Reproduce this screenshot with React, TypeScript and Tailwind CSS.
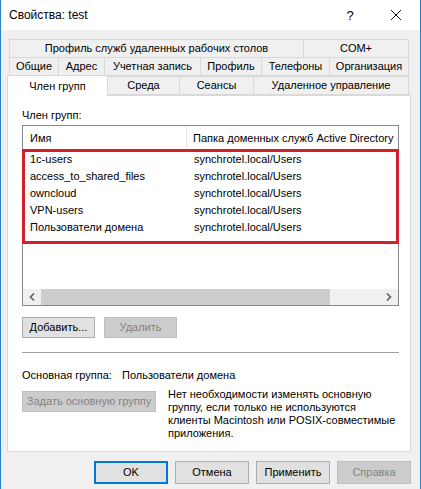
import React from "react";

const rows = [
  { name: "1c-users", path: "synchrotel.local/Users" },
  { name: "access_to_shared_files", path: "synchrotel.local/Users" },
  { name: "owncloud", path: "synchrotel.local/Users" },
  { name: "VPN-users", path: "synchrotel.local/Users" },
  { name: "Пользователи домена", path: "synchrotel.local/Users" },
];

const Tab = ({ label, w, first }: { label: string; w: string; first?: boolean }) => (
  <div
    className={`${w} ${first ? "" : "-ml-px"} h-[19px] flex items-center justify-center border border-[#d9d9d9] bg-[#f0f0f0] whitespace-nowrap`}
  >
    {label}
  </div>
);

const Btn = ({ label, w, h = "h-[21px]", disabled, primary }: { label: string; w: string; h?: string; disabled?: boolean; primary?: boolean }) => (
  <div
    className={`${w} ${h} flex items-center justify-center whitespace-nowrap ${
      disabled
        ? "bg-[#cccccc] border border-[#bfbfbf] text-[#838383]"
        : primary
        ? "bg-[#e1e1e1] border-2 border-[#0078d7] text-black"
        : "bg-[#e1e1e1] border border-[#adadad] text-black"
    }`}
  >
    {label}
  </div>
);

export default function App() {
  return (
    <div className="w-[421px] h-[489px] flex flex-col bg-[#f0f0f0] border-x border-[#2a7fd0] text-[11px] leading-[15px] text-black font-['Liberation_Sans',sans-serif] overflow-hidden">
      <div className="h-[30px] shrink-0 bg-white flex items-center pl-[8px]">
        <span className="text-[12px]">Свойства: test</span>
        <span className="ml-auto w-[46px] text-center text-[13px]">?</span>
        <span className="w-[46px] mr-[1px] flex justify-center">
          <svg width="12" height="12" viewBox="0 0 12 12">
            <path d="M1 1 L11 11 M11 1 L1 11" stroke="#111" strokeWidth="1" />
          </svg>
        </span>
      </div>

      <div className="pt-[9px] pl-[6px]">
        <div className="flex pl-[2px]">
          <Tab label="Профиль служб удаленных рабочих столов" w="w-[295px]" first />
          <Tab label="COM+" w="w-[106px]" />
        </div>
        <div className="flex pl-[2px] -mt-px">
          <Tab label="Общие" w="w-[50px]" first />
          <Tab label="Адрес" w="w-[47px]" />
          <Tab label="Учетная запись" w="w-[97px]" />
          <Tab label="Профиль" w="w-[62px]" />
          <Tab label="Телефоны" w="w-[69px]" />
          <Tab label="Организация" w="w-[80px]" />
        </div>
        <div className="flex -mt-px items-end">
          <div className="relative z-10 w-[101px] h-[21px] -mb-px flex items-center justify-center border border-b-0 border-[#d9d9d9] bg-white">
            Член групп
          </div>
          <Tab label="Среда" w="w-[73px]" />
          <Tab label="Сеансы" w="w-[75px]" />
          <Tab label="Удаленное управление" w="w-[156px]" />
        </div>

        <div className="w-[404px] h-[357px] bg-white border border-[#d9d9d9] pl-[14px] pr-[10px] pt-[12px]">
          <div>Член групп:</div>
          <div className="mt-[2px] w-[377px] h-[181px] border border-[#828790] flex flex-col relative">
            <div className="h-[25px] shrink-0 flex items-start">
              <div className="w-[164px] h-[24px] flex items-center pl-[7px] border-r border-[#e5e5e5]">Имя</div>
              <div className="h-[24px] flex items-center pl-[6px] whitespace-nowrap">Папка доменных служб Active Directory</div>
            </div>
            <div className="flex-1 flex flex-col">
              {rows.map((r) => (
                <div key={r.name} className="h-[17px] flex items-center">
                  <div className="w-[164px] pl-[7px] whitespace-nowrap">{r.name}</div>
                  <div className="pl-[7px]">{r.path}</div>
                </div>
              ))}
            </div>
            {/* red highlight drawn over the rows */}
            <div className="absolute left-[-1px] top-[23px] w-[377px] h-[95px] border-[3px] border-[#d3202f]" />
            <div className="h-[16px] shrink-0 flex items-center bg-[#f0f0f0]">
              <div className="w-[18px] flex justify-center">
                <svg width="6" height="8" viewBox="0 0 6 8">
                  <path d="M5 0.5 L1.5 4 L5 7.5" stroke="#606060" strokeWidth="1.6" fill="none" />
                </svg>
              </div>
              <div className="w-[289px] h-full bg-[#cdcdcd]" />
              <div className="flex-1" />
              <div className="w-[18px] flex justify-center">
                <svg width="6" height="8" viewBox="0 0 6 8">
                  <path d="M1 0.5 L4.5 4 L1 7.5" stroke="#606060" strokeWidth="1.6" fill="none" />
                </svg>
              </div>
            </div>
          </div>

          <div className="mt-[11px] flex gap-[9px]">
            <Btn label="Добавить..." w="w-[73px]" />
            <Btn label="Удалить" w="w-[73px]" disabled />
          </div>

          <div className="mt-[14px] h-px w-[377px] bg-[#a0a0a0]" />

          <div className="mt-[15px] flex">
            <span className="w-[100px]">Основная группа:</span>
            <span>Пользователи домена</span>
          </div>

          <div className="mt-[5px] flex">
            <div className="pt-[3px]">
              <Btn label="Задать основную группу" w="w-[134px]" disabled />
            </div>
            <div className="ml-[12px] leading-[13px] whitespace-nowrap">
              Нет необходимости изменять основную
              <br />
              группу, если только не используются
              <br />
              клиенты Macintosh или POSIX-совместимые
              <br />
              приложения.
            </div>
          </div>
        </div>
      </div>

      <div className="mt-[9px] flex pl-[93px] gap-[7px]">
        <Btn label="OK" w="w-[74px]" h="h-[23px]" primary />
        <Btn label="Отмена" w="w-[74px]" h="h-[23px]" />
        <Btn label="Применить" w="w-[74px]" h="h-[23px]" />
        <Btn label="Справка" w="w-[74px]" h="h-[23px]" disabled />
      </div>
    </div>
  );
}
